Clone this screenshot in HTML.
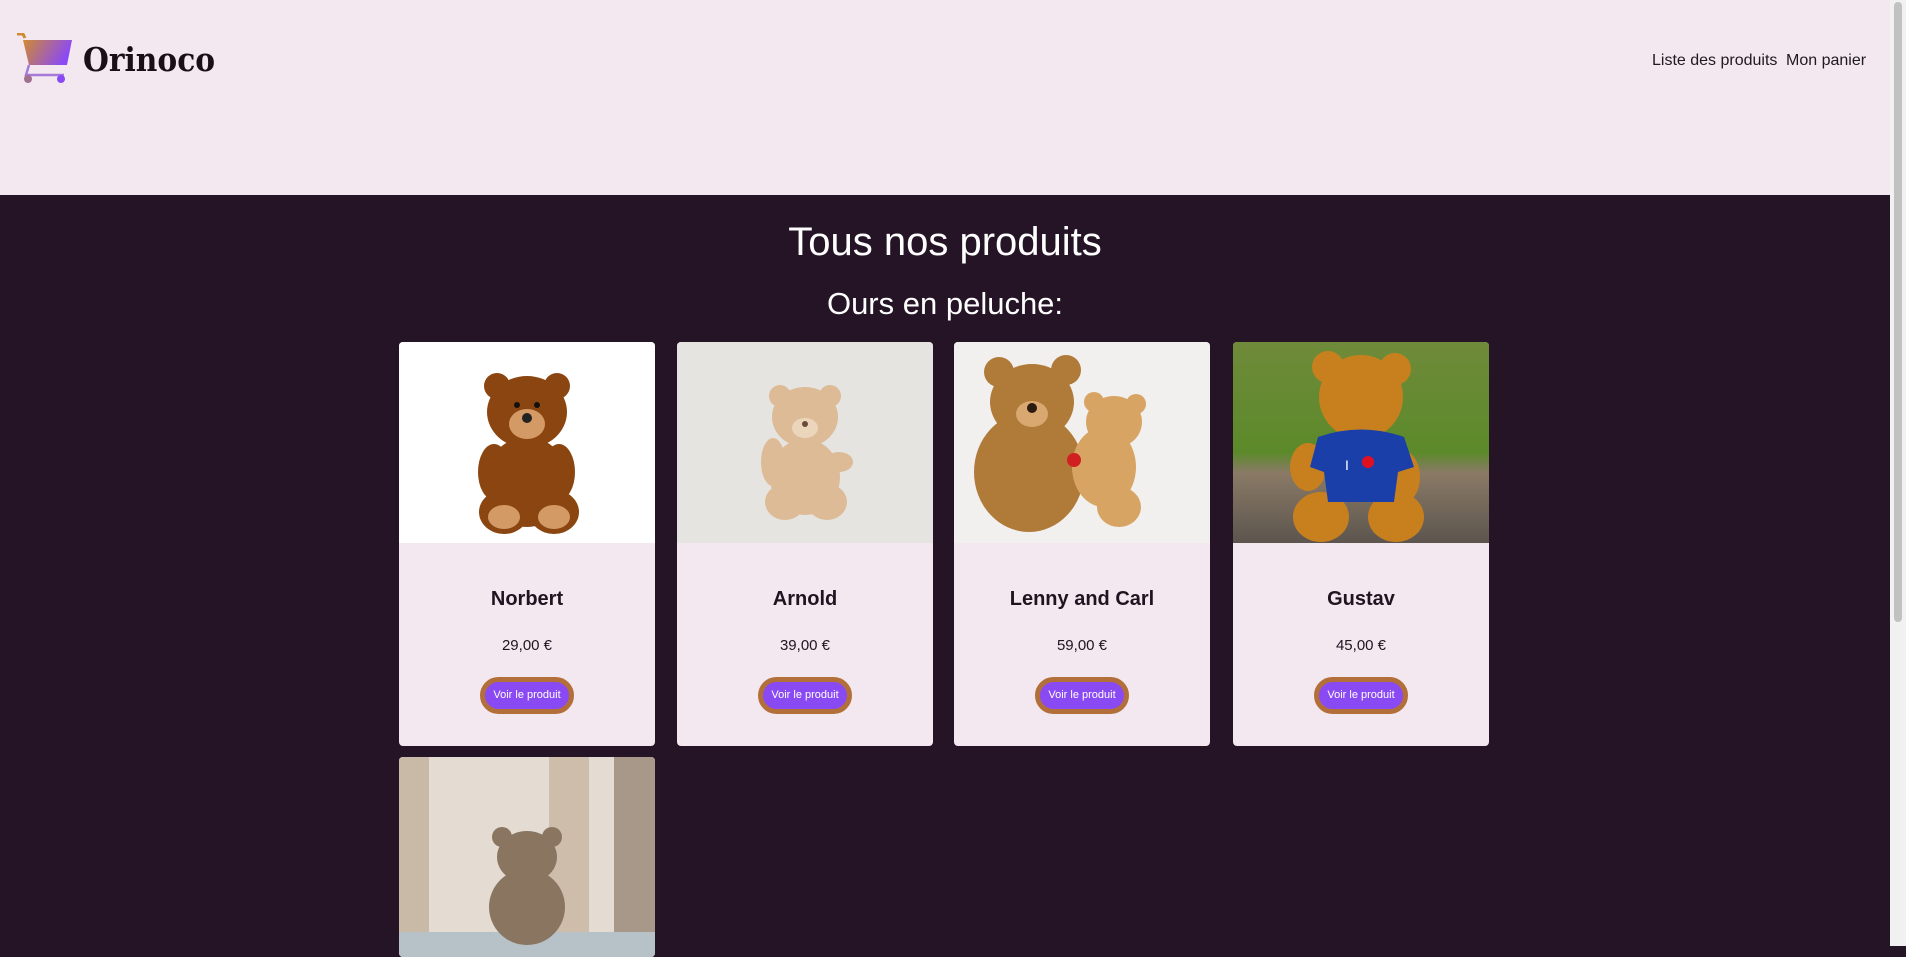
<!DOCTYPE html>
<html><head><meta charset="utf-8"><style>
*{margin:0;padding:0;box-sizing:border-box}
body{width:1906px;height:946px;overflow:hidden;background:#251425;font-family:"Liberation Sans",sans-serif;position:relative}
.hdr{position:absolute;left:0;top:0;width:1890px;height:195px;background:#f3e8f0}
.sb{position:absolute;right:0;top:0;width:16px;height:946px;background:#f1f1f1}
.sb div{position:absolute;left:4px;top:2px;width:8px;height:620px;background:#c1c1c1;border-radius:4px}
.logo{position:absolute;left:83px;top:40px;font-family:"DejaVu Serif",serif;font-weight:bold;font-size:33px;color:#1a0f14;letter-spacing:0;transform:scaleX(0.9);transform-origin:left}
.nav{position:absolute;top:52px;font-size:16px;color:#1f1a1e}
h1{position:absolute;left:0;width:1890px;text-align:center;top:220px;font-weight:normal;font-size:40px;color:#fff}
h2{position:absolute;left:0;width:1890px;text-align:center;top:286px;font-weight:normal;font-size:31px;color:#fff}
.card{position:absolute;top:342px;width:256px;height:404px;background:#f3e8f0;border-radius:4px;overflow:hidden}
.card svg{display:block}
.nm{position:absolute;width:256px;text-align:center;font-weight:bold;font-size:20px;color:#1f1420}
.pr{position:absolute;width:256px;text-align:center;font-size:15px;color:#1f1420}
.btn{position:absolute;left:81px;width:94px;height:37px;border-radius:19px;background:#8a4af3;border:5px solid #b36f3a;color:#fff;font-size:11px;text-align:center;line-height:27px}
</style></head><body>
<div class="hdr">
<svg style="position:absolute;left:15px;top:33px" width="58" height="54" viewBox="0 0 58 54">
<defs><linearGradient id="g" x1="0" y1="0" x2="1" y2="0.3"><stop offset="0" stop-color="#d08a30"/><stop offset="1" stop-color="#8b4af5"/></linearGradient></defs>
<path d="M2 1h6l2 4" stroke="#d08a30" stroke-width="3" fill="none"/>
<path d="M8 7h49l-5 25H14z" fill="url(#g)"/>
<path d="M14 32l-3 10h38" stroke="#a57ad8" stroke-width="2.5" fill="none"/>
<circle cx="13" cy="46" r="4" fill="#a07090"/><circle cx="46" cy="46" r="4" fill="#8b4af5"/>
</svg>
<div class="logo">Orinoco</div>
<div class="nav" style="left:1652px">Liste des produits</div>
<div class="nav" style="left:1786px">Mon panier</div>
</div>
<div class="sb"><div></div></div>
<h1>Tous nos produits</h1>
<h2>Ours en peluche:</h2>

<div class="card" style="left:399px">
<svg width="256" height="201"><rect width="256" height="201" fill="#fff"/>
<g fill="#8a4510"><ellipse cx="128" cy="140" rx="42" ry="45"/><ellipse cx="128" cy="70" rx="40" ry="36"/><circle cx="98" cy="44" r="13"/><circle cx="158" cy="44" r="13"/><ellipse cx="105" cy="170" rx="25" ry="22"/><ellipse cx="155" cy="170" rx="25" ry="22"/><ellipse cx="95" cy="130" rx="16" ry="28"/><ellipse cx="160" cy="130" rx="16" ry="28"/></g>
<ellipse cx="128" cy="82" rx="18" ry="15" fill="#d49a66"/><ellipse cx="105" cy="175" rx="16" ry="12" fill="#d49a66"/><ellipse cx="155" cy="175" rx="16" ry="12" fill="#d49a66"/>
<circle cx="128" cy="76" r="5" fill="#222"/><circle cx="118" cy="63" r="3" fill="#111"/><circle cx="138" cy="63" r="3" fill="#111"/></svg>
<div class="nm" style="top:246px">Norbert</div><div class="pr" style="top:295px">29,00 €</div><div class="btn" style="top:335px">Voir le produit</div></div>

<div class="card" style="left:677px">
<svg width="256" height="201"><rect width="256" height="201" fill="#e6e4e0"/>
<g fill="#dcbb96"><ellipse cx="128" cy="135" rx="35" ry="38"/><ellipse cx="128" cy="75" rx="33" ry="30"/><circle cx="103" cy="54" r="11"/><circle cx="153" cy="54" r="11"/><ellipse cx="108" cy="160" rx="20" ry="18"/><ellipse cx="150" cy="160" rx="20" ry="18"/><ellipse cx="96" cy="120" rx="12" ry="24"/><ellipse cx="162" cy="120" rx="14" ry="10"/></g>
<ellipse cx="128" cy="86" rx="13" ry="10" fill="#ecd6bb"/><circle cx="128" cy="82" r="3" fill="#6a4a3a"/></svg>
<div class="nm" style="top:246px">Arnold</div><div class="pr" style="top:295px">39,00 €</div><div class="btn" style="top:335px">Voir le produit</div></div>

<div class="card" style="left:954px">
<svg width="256" height="201"><rect width="256" height="201" fill="#f2f0ee"/>
<g fill="#b07a38"><ellipse cx="75" cy="130" rx="55" ry="60"/><ellipse cx="78" cy="60" rx="42" ry="38"/><circle cx="45" cy="30" r="15"/><circle cx="112" cy="28" r="15"/></g>
<g fill="#d8a464"><ellipse cx="150" cy="125" rx="32" ry="40"/><ellipse cx="160" cy="80" rx="28" ry="26"/><circle cx="140" cy="60" r="10"/><circle cx="182" cy="62" r="10"/><ellipse cx="165" cy="165" rx="22" ry="20"/></g>
<ellipse cx="78" cy="72" rx="16" ry="13" fill="#d8a870"/><circle cx="78" cy="66" r="5" fill="#2a1a10"/><circle cx="120" cy="118" r="7" fill="#d02020"/></svg>
<div class="nm" style="top:246px">Lenny and Carl</div><div class="pr" style="top:295px">59,00 €</div><div class="btn" style="top:335px">Voir le produit</div></div>

<div class="card" style="left:1233px">
<svg width="256" height="201"><defs><linearGradient id="bg4" x1="0" y1="0" x2="0" y2="1"><stop offset="0" stop-color="#6f8a3a"/><stop offset="0.55" stop-color="#5c8a2a"/><stop offset="0.65" stop-color="#8a7a66"/><stop offset="1" stop-color="#5c554e"/></linearGradient></defs>
<rect width="256" height="201" fill="url(#bg4)"/>
<g fill="#c8801e"><ellipse cx="128" cy="55" rx="42" ry="42"/><circle cx="95" cy="25" r="16"/><circle cx="162" cy="27" r="16"/><ellipse cx="75" cy="125" rx="18" ry="24"/><ellipse cx="170" cy="135" rx="17" ry="26"/><ellipse cx="88" cy="175" rx="28" ry="25"/><ellipse cx="163" cy="175" rx="28" ry="25"/></g>
<path d="M85 95q43-15 86 0l10 30-16 5-4 30H95l-4-30-14-5z" fill="#1a3fa8"/>
<text x="112" y="128" fill="#fff" font-size="14" font-family="Liberation Sans">I</text><circle cx="135" cy="120" r="6" fill="#e01020"/></svg>
<div class="nm" style="top:246px">Gustav</div><div class="pr" style="top:295px">45,00 €</div><div class="btn" style="top:335px">Voir le produit</div></div>

<div class="card" style="left:399px;top:757px;height:200px">
<svg width="256" height="201"><rect width="256" height="201" fill="#e4dcd3"/>
<rect x="0" y="0" width="30" height="201" fill="#c9b9a7"/><rect x="150" y="0" width="40" height="201" fill="#cdbdaa"/><rect x="215" y="0" width="41" height="201" fill="#a8988a"/>
<rect x="0" y="175" width="256" height="26" fill="#b6c2c8"/>
<g fill="#8a7560"><ellipse cx="128" cy="150" rx="38" ry="38"/><ellipse cx="128" cy="100" rx="30" ry="26"/><circle cx="103" cy="80" r="10"/><circle cx="153" cy="80" r="10"/></g></svg></div>
</body></html>
